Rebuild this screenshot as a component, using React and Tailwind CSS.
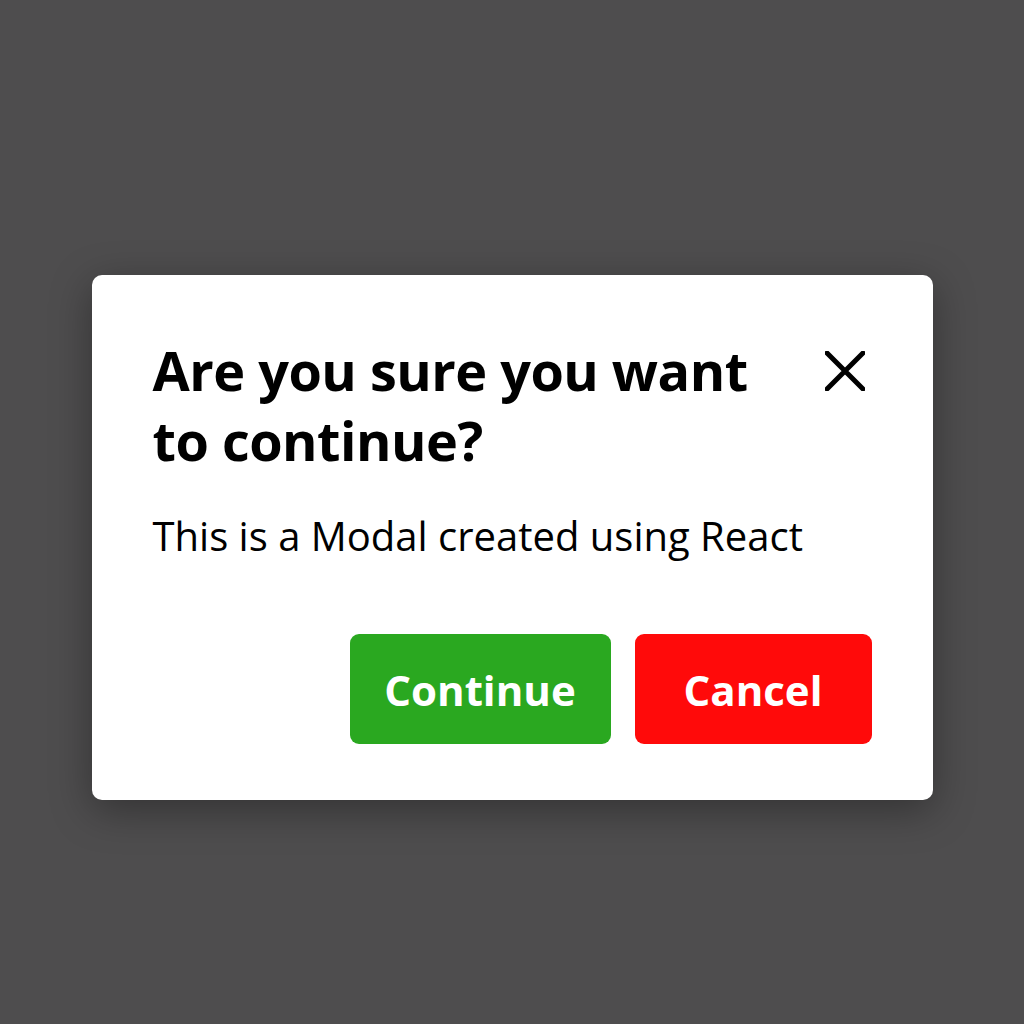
import React from 'react';

function App() {
  return (
    <div
      className="w-full h-[1024px] flex items-start justify-center pt-[275px] bg-[#4e4d4e]"
      style={{ fontFamily: '"Open Sans", "Noto Sans", sans-serif' }}
    >
      {/* Modal */}
      <div className="w-[841px] h-[525px] bg-white rounded-[10px] shadow-[0_10px_40px_rgba(0,0,0,0.35)] pl-[61px] pr-[61px] pt-[60px] pb-[56px] flex flex-col">
        <div className="flex items-start justify-between">
          <h1 className="text-[54px] leading-[70px] font-bold text-black tracking-[-0.5px] w-[610px]">
            Are you sure you want to continue?
          </h1>
          <button className="mt-[16px] mr-[7px] w-[40px] h-[40px] flex items-center justify-center">
            <svg width="40" height="40" viewBox="0 0 40 40">
              <path d="M2 2 L38 38 M38 2 L2 38" stroke="#000" strokeWidth="5" strokeLinecap="round" />
            </svg>
          </button>
        </div>

        <p className="mt-[37px] text-[40px] leading-[48px] text-black">
          This is a Modal created using React
        </p>

        <div className="mt-auto flex justify-end gap-[24px]">
          <button className="w-[261px] h-[110px] rounded-[9px] bg-[#2aa820] text-white text-[42px] font-bold">
            Continue
          </button>
          <button className="w-[237px] h-[110px] rounded-[9px] bg-[#ff0a0a] text-white text-[42px] font-bold">
            Cancel
          </button>
        </div>
      </div>
    </div>
  );
}

export default App;
